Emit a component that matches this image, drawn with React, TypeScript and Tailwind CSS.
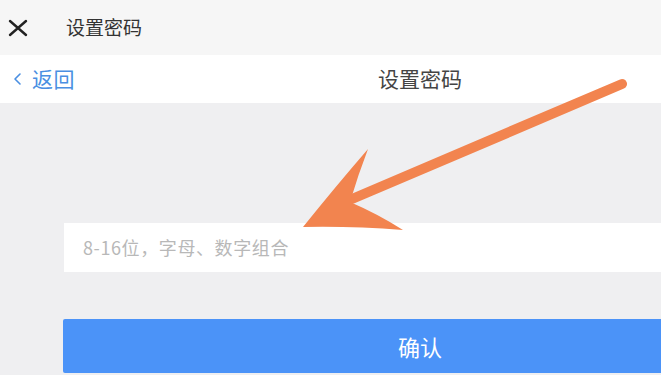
import React from "react";

const font = '"Noto Sans CJK SC", "Noto Sans", sans-serif';

const CloseIcon = () => (
  <svg width="20" height="20" viewBox="0 0 20 20" fill="none">
    <path d="M2 3L18 17M18 3L2 17" stroke="#222" strokeWidth="2.4" strokeLinecap="round" />
  </svg>
);

const Arrow = () => (
  <svg className="absolute left-0 top-0 pointer-events-none" width="661" height="375" viewBox="0 0 661 375">
    <line x1="622" y1="84" x2="352" y2="199" stroke="#f2844f" strokeWidth="10" strokeLinecap="round" />
    <path
      d="M368 149 Q336 186 303 227 Q352 226 403 230 Q378 214 350 202 Q358 175 368 149 Z"
      fill="#f2844f"
    />
  </svg>
);

export default function App() {
  return (
    <div className="relative w-[661px] h-[375px] overflow-hidden bg-[#efeff1]" style={{ fontFamily: font }}>
      <div className="w-[840px] flex flex-col">
        {/* window bar */}
        <div className="h-[55px] bg-[#f6f6f6] flex items-center">
          <div className="w-[66px] pl-[8px] flex items-center">
            <CloseIcon />
          </div>
          <span className="text-[19px] text-[#333]">设置密码</span>
        </div>

        {/* nav bar */}
        <div className="h-[48px] bg-white relative flex items-center justify-center">
          <div className="absolute left-[13px] top-0 h-full flex items-center gap-[10px] text-[#4a8fe2]">
            <svg width="9" height="14" viewBox="0 0 9 14" fill="none">
              <path d="M7 2L2 7L7 12" stroke="#4a8fe2" strokeWidth="1.6" strokeLinecap="round" strokeLinejoin="round" />
            </svg>
            <span className="text-[21px] tracking-[0.5px]">返回</span>
          </div>
          <span className="text-[21px] text-[#444]">设置密码</span>
        </div>

        {/* content */}
        <div className="pt-[120px] flex flex-col">
          <div className="mx-[64px] h-[49px] bg-white flex items-center pl-[19px]">
            <span className="text-[18px] tracking-[0.6px] text-[#b8b8b8]">8-16位，字母、数字组合</span>
          </div>
          <button className="mx-[63px] mt-[47px] h-[54px] bg-[#4b93f8] rounded-[2px] flex items-center justify-center">
            <span className="text-[22px] text-white">确认</span>
          </button>
        </div>
      </div>
      <Arrow />
    </div>
  );
}
